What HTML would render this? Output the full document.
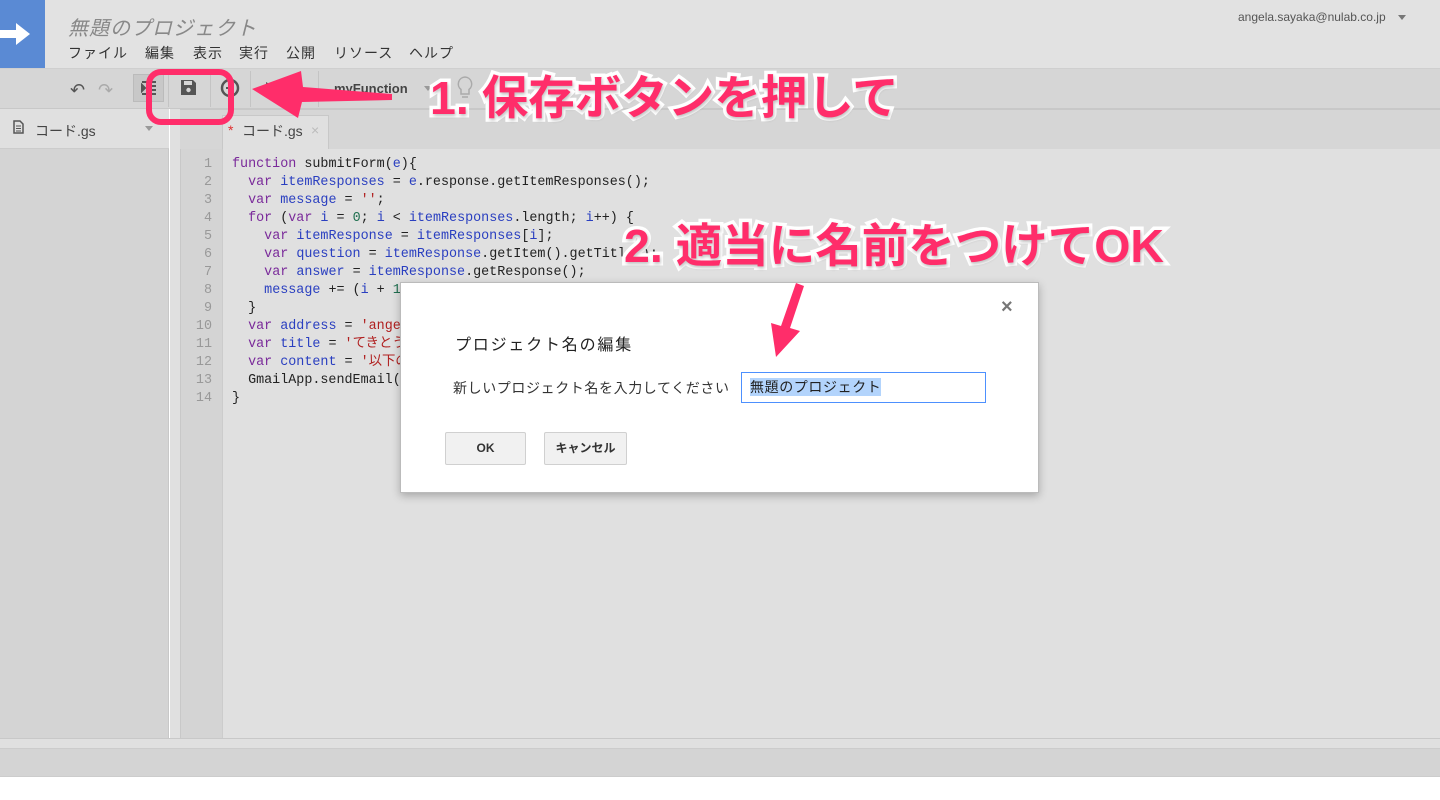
<!DOCTYPE html>
<html><head><meta charset="utf-8"><style>
*{margin:0;padding:0;box-sizing:border-box}
body{width:1440px;height:800px;position:relative;background:#fff;font-family:"Liberation Sans","Noto Sans CJK JP",sans-serif;overflow:hidden}
.a{position:absolute}
.code{font-family:"Liberation Mono","Noto Sans CJK JP",monospace;font-size:13.4px;line-height:18px;color:#222;white-space:pre}
.k{color:#7a2a9a}.v{color:#2a3fc0}.s{color:#b02020}.n{color:#207050}
.ann{font-weight:bold;color:#ff2d6a;-webkit-text-stroke:7px #fff;paint-order:stroke fill;font-family:"Liberation Sans","Noto Sans CJK JP",sans-serif;white-space:nowrap;text-shadow:1px 2px 3px rgba(0,0,0,.25)}
.btn{position:absolute;border:1px solid #d0d0d0;background:#f1f1f1;font-size:12px;font-weight:bold;color:#333;text-align:center;line-height:31px;border-radius:2px}
.m{position:absolute;top:43px;font-size:14px;color:#333}
</style></head><body>
<div class="a" style="left:0;top:0;width:1440px;height:69px;background:#e2e2e2;border-bottom:1px solid #cfcfcf"></div>
<div class="a" style="left:0;top:0;width:45px;height:68px;background:#5a8ad4"></div>
<svg class="a" style="left:0;top:20px" width="40" height="28"><path d="M0 10h16V3l14 11-14 11v-7H0z" fill="#fff"/></svg>
<div class="a" style="left:68px;top:12px;font-size:20px;font-style:italic;color:#888;letter-spacing:1px">無題のプロジェクト</div>
<div class="m" style="left:68px;letter-spacing:1px">ファイル</div>
<div class="m" style="left:145px;letter-spacing:1px">編集</div>
<div class="m" style="left:193px;letter-spacing:1px">表示</div>
<div class="m" style="left:239px;letter-spacing:1px">実行</div>
<div class="m" style="left:286px;letter-spacing:1px">公開</div>
<div class="m" style="left:334px;letter-spacing:1px">リソース</div>
<div class="m" style="left:409px;letter-spacing:1px">ヘルプ</div>
<div class="a" style="left:1238px;top:10px;font-size:12px;color:#555">angela.sayaka@nulab.co.jp</div>
<div class="a" style="left:1398px;top:15px;border:4px solid transparent;border-top:5px solid #777"></div>
<div class="a" style="left:0;top:69px;width:1440px;height:40px;background:#d6d6d6;border-bottom:1px solid #c8c8c8"></div>
<div class="a" style="left:70px;top:80px;font-size:18px;color:#555">↶</div>
<div class="a" style="left:98px;top:80px;font-size:18px;color:#aaa">↷</div>
<div class="a" style="left:133px;top:74px;width:31px;height:28px;background:#c8c8c8;border:1px solid #bbb"></div>
<svg class="a" style="left:140px;top:80px" width="18" height="16"><path d="M2 2h14M7 6h9M7 10h9M2 14h14M2 5l3 3-3 3z" stroke="#555" stroke-width="2" fill="#555"/></svg>
<div class="a" style="left:168px;top:71px;width:1px;height:36px;background:#c4c4c4"></div>
<div class="a" style="left:210px;top:71px;width:1px;height:36px;background:#c4c4c4"></div>
<div class="a" style="left:250px;top:71px;width:1px;height:36px;background:#c4c4c4"></div>
<div class="a" style="left:318px;top:71px;width:1px;height:36px;background:#c4c4c4"></div>
<svg class="a" style="left:180px;top:79px" width="17" height="17"><path d="M1 1h12l3 3v12H1z" fill="#555"/><rect x="4" y="2" width="8" height="4" fill="#d6d6d6"/><circle cx="8.5" cy="11" r="2.2" fill="#d6d6d6"/></svg>
<svg class="a" style="left:220px;top:78px" width="20" height="20"><circle cx="10" cy="10" r="8" fill="none" stroke="#555" stroke-width="2.5"/><path d="M6 10h8" stroke="#555" stroke-width="2"/></svg>
<svg class="a" style="left:264px;top:80px" width="40" height="16"><path d="M2 2l10 6-10 6z" fill="#555"/><rect x="26" y="3" width="10" height="11" rx="4" fill="#555"/></svg>
<div class="a" style="left:334px;top:81px;font-size:13px;font-weight:bold;color:#444">myFunction</div>
<div class="a" style="left:424px;top:86px;border:4px solid transparent;border-top:5px solid #999"></div>
<svg class="a" style="left:455px;top:75px" width="20" height="28"><path d="M10 2a7 7 0 0 0-4 12.5V19h8v-4.5A7 7 0 0 0 10 2z" fill="none" stroke="#aaa" stroke-width="1.5"/><path d="M7 22h6" stroke="#aaa" stroke-width="1.5"/></svg>
<div class="a" style="left:0;top:109px;width:169px;height:630px;background:#d4d4d4;border-right:1px solid #c8c8c8"></div>
<div class="a" style="left:0;top:109px;width:169px;height:40px;background:#e0e0e0;border-bottom:1px solid #ccc"></div>
<svg class="a" style="left:13px;top:120px" width="11" height="14"><path d="M1 1h6l3 3v9H1z" fill="none" stroke="#555" stroke-width="1.5"/><path d="M3 6h5M3 8.5h5M3 11h5" stroke="#555"/></svg>
<div class="a" style="left:35px;top:121px;font-size:14px;color:#444">コード.gs</div>
<div class="a" style="left:145px;top:126px;border:4px solid transparent;border-top:5px solid #999"></div>
<div class="a" style="left:170px;top:109px;width:10px;height:630px;background:#e0e0e0"></div>
<div class="a" style="left:180px;top:109px;width:1260px;height:40px;background:#d6d6d6;border-top:1px solid #c8c8c8"></div>
<div class="a" style="left:222px;top:115px;width:107px;height:35px;background:#e0e0e0;border:1px solid #c8c8c8;border-bottom:none"></div>
<div class="a" style="left:228px;top:122px;font-size:14px;color:#e03030">*</div>
<div class="a" style="left:242px;top:121px;font-size:14px;color:#444">コード.gs</div>
<div class="a" style="left:311px;top:122px;font-size:14px;color:#bbb">×</div>
<div class="a" style="left:180px;top:149px;width:43px;height:590px;background:#d4d4d4;border-left:1px solid #c8c8c8;border-right:1px solid #ccc"></div>
<div class="a" style="left:223px;top:149px;width:1217px;height:590px;background:#e0e0e0"></div>
<div class="a code" style="left:186px;top:156px;width:26px;text-align:right;color:#999">1
2
3
4
5
6
7
8
9
10
11
12
13
14</div>
<div class="a code" style="left:232px;top:156px"><span class="k">function</span> submitForm(<span class="v">e</span>){
  <span class="k">var</span> <span class="v">itemResponses</span> = <span class="v">e</span>.response.getItemResponses();
  <span class="k">var</span> <span class="v">message</span> = <span class="s">''</span>;
  <span class="k">for</span> (<span class="k">var</span> <span class="v">i</span> = <span class="n">0</span>; <span class="v">i</span> &lt; <span class="v">itemResponses</span>.length; <span class="v">i</span>++) {
    <span class="k">var</span> <span class="v">itemResponse</span> = <span class="v">itemResponses</span>[<span class="v">i</span>];
    <span class="k">var</span> <span class="v">question</span> = <span class="v">itemResponse</span>.getItem().getTitle();
    <span class="k">var</span> <span class="v">answer</span> = <span class="v">itemResponse</span>.getResponse();
    <span class="v">message</span> += (<span class="v">i</span> + <span class="n">1</span>
  }
  <span class="k">var</span> <span class="v">address</span> = <span class="s">'angela'</span>
  <span class="k">var</span> <span class="v">title</span> = <span class="s">'てきとう'</span>
  <span class="k">var</span> <span class="v">content</span> = <span class="s">'以下の'</span>
  GmailApp.sendEmail(
}</div>
<div class="a" style="left:0;top:738px;width:1440px;height:10px;background:#e0e0e0;border-top:1px solid #c8c8c8"></div>
<div class="a" style="left:0;top:748px;width:1440px;height:29px;background:#d4d4d4;border-top:1px solid #ccc;border-bottom:1px solid #ccc"></div>
<div class="a" style="left:400px;top:282px;width:639px;height:211px;background:#fff;border:1px solid #bbb;box-shadow:0 3px 8px rgba(0,0,0,.25)"></div>
<div class="a" style="left:1001px;top:296px;font-size:20px;color:#777;font-weight:bold">×</div>
<div class="a" style="left:455px;top:331px;font-size:16px;color:#222;letter-spacing:1.8px">プロジェクト名の編集</div>
<div class="a" style="left:453px;top:378px;font-size:14px;color:#333;letter-spacing:0.6px">新しいプロジェクト名を入力してください</div>
<div class="a" style="left:741px;top:372px;width:245px;height:31px;border:1px solid #4d90fe;background:#fff"></div>
<div class="a" style="left:750px;top:378px;font-size:14px;color:#222;background:#b3d4fc;line-height:18px;letter-spacing:0.6px">無題のプロジェクト</div>
<div class="btn" style="left:445px;top:432px;width:81px;height:33px">OK</div>
<div class="btn" style="left:544px;top:432px;width:83px;height:33px">キャンセル</div>
<div class="a" style="left:146px;top:69px;width:88px;height:56px;border:6px solid #ff2d6a;border-radius:15px"></div>
<svg class="a" style="left:0;top:0" width="1440" height="800">
<path d="M392 94 L392 100 L302 102 L298 118 L252 89 L301 71 L303 87 Z" fill="#ff2d6a"/>
<path d="M804 286 L790 328 L800 331 L776 357 L771 323 L781 326 L796 283 Z" fill="#ff2d6a"/>
</svg>
<div class="a ann" style="left:430px;top:61px;font-size:46.5px">1. 保存ボタンを押して</div>
<div class="a ann" style="left:624px;top:209px;font-size:46.5px">2. 適当に名前をつけてOK</div>
</body></html>
